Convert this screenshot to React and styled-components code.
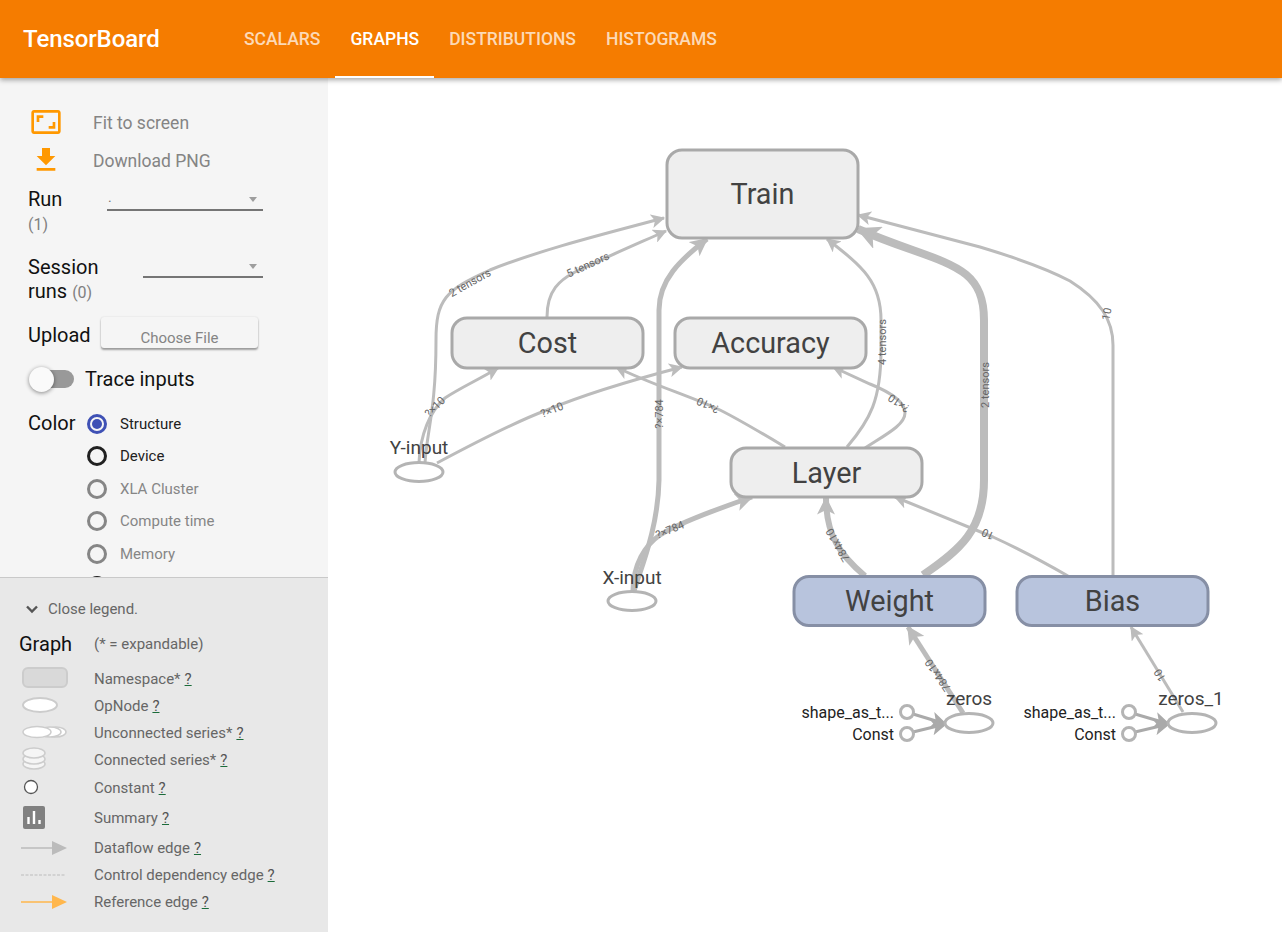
import styled, { createGlobalStyle } from "styled-components"

const GlobalStyle = createGlobalStyle`
  html, body {
    margin: 0;
    height: 100%;
    overflow: hidden;
    font-family: Roboto, "Liberation Sans", sans-serif;
  }
  #root {
    height: 100%;
  }
`

const Page = styled.div`
  height: 100vh;
  display: flex;
  flex-direction: column;
`

const Header = styled.header`
  height: 78px;
  flex: none;
  display: flex;
  align-items: stretch;
  background: #f57c00;
  box-shadow: 0 2px 5px rgba(0, 0, 0, 0.35);
  position: relative;
  z-index: 2;
`

const Title = styled.div`
  width: 206px;
  padding-left: 23px;
  line-height: 78px;
  font-size: 24px;
  font-weight: 500;
  color: #fff;
  letter-spacing: -0.1px;
`

const Tab = styled.div`
  padding: 0 15px;
  line-height: 78px;
  font-size: 17.5px;
  font-weight: 500;
  color: ${props => (props.$active ? "#fff" : "rgba(255, 255, 255, 0.72)")};
  border-bottom: 2px solid ${props => (props.$active ? "#fff" : "transparent")};
  height: 76px;
`

const Body = styled.div`
  flex: 1;
  min-height: 0;
  display: flex;
`

const Sidebar = styled.aside`
  width: 328px;
  flex: none;
  display: flex;
  flex-direction: column;
`

const Controls = styled.div`
  flex: 1;
  min-height: 0;
  overflow: hidden;
  background: #f5f5f5;
  padding: 25px 0 0 28px;
`

const ToolRow = styled.div`
  height: 38px;
  display: flex;
  align-items: center;
  font-size: 17.5px;
  color: #848484;
`

const ToolIcon = styled.svg`
  width: 32px;
  height: 32px;
  margin: 0 31px 0 2px;
  fill: #ff9800;
`

const ToolLabel = styled.span`
  padding-top: 2px;
`

const FieldRow = styled.div`
  display: flex;
  align-items: flex-start;
  margin-top: ${props => props.$top}px;
`

const FieldLabel = styled.div`
  width: ${props => props.$width}px;
  flex: none;
  padding-top: ${props => props.$pad || 0}px;
  font-size: 20px;
  line-height: 24px;
  color: #111;
`

const Count = styled.span`
  font-size: 16px;
  line-height: 16px;
  color: #808080;
`

const Select = styled.div`
  width: ${props => props.$width}px;
  height: 24px;
  box-sizing: border-box;
  border-bottom: 2px solid #757575;
  display: flex;
  justify-content: space-between;
  padding: 0 2px 0 1px;
  font-size: 14px;
  line-height: 20px;
  color: #757575;
`

const Caret = styled.div`
  width: 0;
  height: 0;
  margin: 10px 4px 0 0;
  border-left: 4px solid transparent;
  border-right: 4px solid transparent;
  border-top: 5px solid #9e9e9e;
`

const UploadLabel = styled.div`
  width: 73px;
  height: 31px;
  font-size: 20px;
  line-height: 37px;
  color: #111;
`

const FileButton = styled.div`
  width: 157px;
  height: 31px;
  box-sizing: border-box;
  padding-top: 12px;
  border-radius: 3px;
  background: #f5f5f5;
  box-shadow: 0 2px 2px rgba(0, 0, 0, 0.35), 0 0 2px rgba(0, 0, 0, 0.12);
  text-align: center;
  font-size: 15px;
  line-height: 18px;
  color: #848484;
`

const ToggleRow = styled.div`
  display: flex;
  align-items: center;
  height: 24px;
  margin-top: 19px;
  font-size: 20px;
  color: #111;
`

const Toggle = styled.div`
  width: 46px;
  height: 25px;
  margin: 0 11px 0 0;
  position: relative;
`

const ToggleTrack = styled.div`
  position: absolute;
  left: 7px;
  right: 0;
  top: 3px;
  height: 18px;
  border-radius: 9px;
  background: #999;
`

const ToggleKnob = styled.div`
  position: absolute;
  left: 1px;
  top: 0;
  width: 25px;
  height: 25px;
  border-radius: 50%;
  background: #fafafa;
  box-shadow: 0 1px 4px rgba(0, 0, 0, 0.45);
`

const ColorRow = styled.div`
  display: flex;
  margin-top: 16.5px;
`

const ColorLabel = styled.div`
  width: 59px;
  flex: none;
  font-size: 20px;
  line-height: 31px;
  color: #111;
`

const RadioRow = styled.div`
  height: 32.5px;
  display: flex;
  align-items: center;
  font-size: 15px;
  color: ${props => (props.$disabled ? "#868686" : "#212121")};
`

const Radio = styled.div`
  width: 20px;
  height: 20px;
  box-sizing: border-box;
  margin-right: 13px;
  border-radius: 50%;
  border: 3px solid ${props => props.$color};
  display: flex;
  align-items: center;
  justify-content: center;

  &::after {
    content: "";
    width: 10px;
    height: 10px;
    border-radius: 50%;
    background: ${props => (props.$checked ? props.$color : "transparent")};
  }
`

const Legend = styled.div`
  height: 355px;
  flex: none;
  box-sizing: border-box;
  overflow: hidden;
  background: #e8e8e8;
  border-top: 1px solid #c9c9c9;
  padding: 21px 0 0 19px;
`

const CloseRow = styled.div`
  display: flex;
  align-items: center;
  height: 20px;
  font-size: 15px;
  color: #666;
`

const Chevron = styled.svg`
  width: 16px;
  height: 16px;
  margin: 0 8px 0 5px;
  stroke: #555;
  stroke-width: 2.4;
  fill: none;
`

const GraphRow = styled.div`
  display: flex;
  align-items: center;
  height: 20px;
  margin: 15px 0 11.5px;
`

const GraphTitle = styled.div`
  width: 75px;
  font-size: 20px;
  color: #111;
`

const LegendHint = styled.div`
  font-size: 15px;
  color: #666;
`

const LegendRow = styled.div`
  height: ${props => props.$height}px;
  display: flex;
  align-items: center;
  font-size: 15px;
  color: #666;
`

const LegendIcon = styled.svg`
  width: 75px;
  height: 30px;
  flex: none;
  overflow: visible;
`

const Help = styled.span`
  margin-left: 4px;
  color: #555;
  text-decoration: underline;
  text-decoration-color: #1b6b3a;
`

const Main = styled.main`
  flex: 1;
  min-width: 0;
  background: #fff;
`

const Graph = styled.svg`
  display: block;
  width: 954px;
  height: 854px;
`

const NodeBox = styled.rect`
  fill: ${props => (props.$blue ? "#b8c4dd" : "#eee")};
  stroke: ${props => (props.$blue ? "#868fa5" : "#a9a9a9")};
  stroke-width: 3;
`

const NodeText = styled.text`
  font-family: Roboto, "Liberation Sans", sans-serif;
  font-size: 28.8px;
  fill: #424242;
  text-anchor: middle;
  dominant-baseline: central;
`

const OpEllipse = styled.ellipse`
  fill: #fff;
  stroke: #b4b4b4;
  stroke-width: 3;
`

const OpText = styled.text`
  font-family: Roboto, "Liberation Sans", sans-serif;
  font-size: 19px;
  fill: #424242;
  text-anchor: middle;
  dominant-baseline: central;
`

const ConstText = styled.text`
  font-family: Roboto, "Liberation Sans", sans-serif;
  font-size: 16px;
  fill: #222;
  text-anchor: end;
  dominant-baseline: central;
`

const Edge = styled.path`
  fill: none;
  stroke: ${props => props.$color || "#bcbcbc"};
  stroke-width: ${props => props.$w};
`

const EdgeLabel = styled.text`
  font-family: Roboto, "Liberation Sans", sans-serif;
  font-size: 11px;
  fill: #666;
  text-anchor: middle;
  dominant-baseline: central;
`

const tabs = ["SCALARS", "GRAPHS", "DISTRIBUTIONS", "HISTOGRAMS"]

const radios = [
  { label: "Structure", color: "#3f51b5", checked: true },
  { label: "Device", color: "#212121" },
  { label: "XLA Cluster", color: "#868686", disabled: true },
  { label: "Compute time", color: "#868686", disabled: true },
  { label: "Memory", color: "#868686", disabled: true },
  { label: "", color: "#212121" },
]

const nodes = [
  { label: "Train", x: 667, y: 150, h: 88 },
  { label: "Cost", x: 452, y: 318, h: 50 },
  { label: "Accuracy", x: 675, y: 318, h: 50 },
  { label: "Layer", x: 731, y: 448, h: 49 },
  { label: "Weight", x: 794, y: 576.5, h: 49, blue: true },
  { label: "Bias", x: 1017, y: 576.5, h: 49, blue: true },
]

const edges = [
  { d: "M425 463C427 430 436 410 436 340C436 300 445 290 490 270C540 250 600 235 664 218", w: 3, m: "s" },
  { d: "M419 463C420 435 430 411 445 398C460 388 478 380 498 368", w: 3, m: "s" },
  { d: "M437 463C480 440 520 420 547 410C590 392 640 378 682 367", w: 3, m: "s" },
  { d: "M547 317C547 290 560 280 575 272C600 260 630 247 666 231", w: 3, m: "s" },
  { d: "M634 591C640 570 658 530 659 480L659 310C659 280 680 260 707 239", w: 5, m: "m" },
  { d: "M633 591C633 565 645 545 660 535C680 522 720 508 752 497", w: 5, m: "m" },
  { d: "M785 447C760 432 740 420 720 410C690 396 650 384 616 367", w: 3, m: "s" },
  { d: "M865 448C885 435 905 425 905 413C905 400 885 390 870 384L833 367", w: 3, m: "s" },
  { d: "M847 447C870 420 881 400 881 350L881 320C881 280 860 265 827 239", w: 3, m: "s" },
  { d: "M865 576C840 555 826 535 826 498", w: 6, m: "m" },
  { d: "M923 575C960 550 984 530 984 480L984 320C984 260 940 265 858 229", w: 8, m: "l" },
  { d: "M1113 577L1113 345C1113 320 1100 300 1070 281C1040 265 1000 253 980 247L858 215", w: 3, m: "s" },
  { d: "M1068 576C1040 560 1015 547 993 537L895 497", w: 3, m: "s" },
  { d: "M963 713L908 627", w: 5, m: "m" },
  { d: "M1183 712L1131 627", w: 3, m: "s" },
  { d: "M913 714L946 724", w: 3, m: "c", color: "#aaa" },
  { d: "M913 732L946 724", w: 3, m: "c", color: "#aaa" },
  { d: "M1135 714L1169 724", w: 3, m: "c", color: "#aaa" },
  { d: "M1135 732L1169 724", w: 3, m: "c", color: "#aaa" },
]

const edgeLabels = [
  { text: "2 tensors", x: 470, y: 283, r: -29 },
  { text: "5 tensors", x: 588, y: 265, r: -25 },
  { text: "?×10", x: 435, y: 407, r: -45 },
  { text: "?×10", x: 552, y: 410, r: -22 },
  { text: "?×784", x: 659, y: 414, r: -90 },
  { text: "?×10", x: 708, y: 405, r: 205 },
  { text: "?×10", x: 899, y: 403, r: 215 },
  { text: "4 tensors", x: 882, y: 342, r: -90 },
  { text: "2 tensors", x: 985, y: 385, r: -90 },
  { text: "10", x: 1107, y: 314, r: -80 },
  { text: "10", x: 988, y: 534, r: 205 },
  { text: "?×784", x: 670, y: 530, r: -22 },
  { text: "784x10", x: 838, y: 545, r: 240 },
  { text: "784x10", x: 938, y: 675, r: 235 },
  { text: "10", x: 1160, y: 675, r: 238 },
]

const ops = [
  { label: "Y-input", x: 419, y: 472, tx: 419, ty: 447 },
  { label: "X-input", x: 632, y: 601, tx: 632, ty: 577 },
  { label: "zeros", x: 969, y: 723, tx: 969, ty: 698 },
  { label: "zeros_1", x: 1192, y: 723, tx: 1191, ty: 698 },
]

const constants = [
  { label: "shape_as_t...", x: 907, y: 712 },
  { label: "Const", x: 907, y: 734 },
  { label: "shape_as_t...", x: 1129, y: 712 },
  { label: "Const", x: 1129, y: 734 },
]

const Marker = ({ id, size, color = "#bcbcbc" }) => (
  <marker
    id={id}
    viewBox="0 0 12 12"
    refX="11"
    refY="6"
    markerWidth={size}
    markerHeight={size}
    markerUnits="userSpaceOnUse"
    orient="auto"
  >
    <path d="M0 0L12 6L0 12L3 6Z" fill={color} />
  </marker>
)

const legendRows = [
  {
    label: "Namespace*",
    height: 27,
    icon: <rect x="4" y="4" width="44" height="19" rx="5" fill="#d9d9d9" stroke="#ccc" strokeWidth="2" />,
  },
  {
    label: "OpNode",
    height: 27,
    icon: <ellipse cx="21" cy="14" rx="17" ry="7" fill="#fff" stroke="#ccc" strokeWidth="2" />,
  },
  {
    label: "Unconnected series*",
    height: 27,
    icon: (
      <g fill="#fff" stroke="#ccc" strokeWidth="1.5">
        <ellipse cx="37" cy="14" rx="10" ry="5" />
        <ellipse cx="31" cy="14" rx="11" ry="5" />
        <ellipse cx="18" cy="14" rx="14" ry="5.5" />
      </g>
    ),
  },
  {
    label: "Connected series*",
    height: 27,
    icon: (
      <g fill="#f5f5f5" stroke="#ccc" strokeWidth="1.5">
        <ellipse cx="15" cy="19" rx="11" ry="5" />
        <ellipse cx="15" cy="14" rx="11" ry="5" />
        <ellipse cx="15" cy="8" rx="11" ry="5" />
      </g>
    ),
  },
  {
    label: "Constant",
    height: 29,
    icon: <circle cx="12" cy="14" r="6.5" fill="#fff" stroke="#555" strokeWidth="1.3" />,
  },
  {
    label: "Summary",
    height: 31,
    icon: (
      <g>
        <rect x="4" y="3" width="22" height="23" rx="2" fill="#808080" />
        <path d="M9.5 21v-7M15 21V8M20.5 21v-4" stroke="#fff" strokeWidth="2.4" />
      </g>
    ),
  },
  {
    label: "Dataflow edge",
    height: 29,
    icon: (
      <g>
        <path d="M2 15H36" stroke="#bbb" strokeWidth="1.5" />
        <path d="M33 8L48 15L33 22Z" fill="#bbb" />
      </g>
    ),
  },
  {
    label: "Control dependency edge",
    height: 25,
    icon: <path d="M2 15H47" stroke="#bbb" strokeWidth="1.2" strokeDasharray="3 1.5" />,
  },
  {
    label: "Reference edge",
    height: 29,
    icon: (
      <g>
        <path d="M2 15H36" stroke="#ffb74d" strokeWidth="1.5" />
        <path d="M33 8L48 15L33 22Z" fill="#ffb74d" />
      </g>
    ),
  },
]

export default function App() {
  return (
    <Page>
      <GlobalStyle />
      <Header>
        <Title>TensorBoard</Title>
        {tabs.map(tab => (
          <Tab key={tab} $active={tab === "GRAPHS"}>
            {tab}
          </Tab>
        ))}
      </Header>
      <Body>
        <Sidebar>
          <Controls>
            <ToolRow>
              <ToolIcon viewBox="0 0 24 24">
                <path d="M19 12h-2v3h-3v2h5v-5zM7 9h3V7H5v5h2V9zm14-6H3c-1.1 0-2 .9-2 2v14c0 1.1.9 2 2 2h18c1.1 0 2-.9 2-2V5c0-1.1-.9-2-2-2zm0 16.01H3V4.99h18v14.02z" />
              </ToolIcon>
              <ToolLabel>Fit to screen</ToolLabel>
            </ToolRow>
            <ToolRow>
              <ToolIcon viewBox="0 0 24 24">
                <path d="M19 9h-4V3H9v6H5l7 7 7-7zM5 18v2h14v-2H5z" />
              </ToolIcon>
              <ToolLabel>Download PNG</ToolLabel>
            </ToolRow>
            <FieldRow $top={8}>
              <FieldLabel $width={79}>
                Run
                <br />
                <Count>(1)</Count>
              </FieldLabel>
              <Select $width={156}>
                .
                <Caret />
              </Select>
            </FieldRow>
            <FieldRow $top={19}>
              <FieldLabel $width={115} $pad={1}>
                Session
                <br />
                runs <Count>(0)</Count>
              </FieldLabel>
              <Select $width={120}>
                <span />
                <Caret />
              </Select>
            </FieldRow>
            <FieldRow $top={14}>
              <UploadLabel>Upload</UploadLabel>
              <FileButton>Choose File</FileButton>
            </FieldRow>
            <ToggleRow>
              <Toggle>
                <ToggleTrack />
                <ToggleKnob />
              </Toggle>
              Trace inputs
            </ToggleRow>
            <ColorRow>
              <ColorLabel>Color</ColorLabel>
              <div>
                {radios.map((radio, i) => (
                  <RadioRow key={i} $disabled={radio.disabled}>
                    <Radio $color={radio.color} $checked={radio.checked} />
                    {radio.label}
                  </RadioRow>
                ))}
              </div>
            </ColorRow>
          </Controls>
          <Legend>
            <CloseRow>
              <Chevron viewBox="0 0 16 16">
                <path d="M3 5.5L8 10.5L13 5.5" />
              </Chevron>
              Close legend.
            </CloseRow>
            <GraphRow>
              <GraphTitle>Graph</GraphTitle>
              <LegendHint>(* = expandable)</LegendHint>
            </GraphRow>
            {legendRows.map(row => (
              <LegendRow key={row.label} $height={row.height}>
                <LegendIcon viewBox="0 0 75 30">{row.icon}</LegendIcon>
                {row.label}
                <Help>?</Help>
              </LegendRow>
            ))}
          </Legend>
        </Sidebar>
        <Main>
          <Graph viewBox="328 78 954 854">
            <defs>
              <Marker id="arrow-s" size={14} />
              <Marker id="arrow-m" size={18} />
              <Marker id="arrow-l" size={24} />
              <Marker id="arrow-c" size={16} color="#aaa" />
            </defs>
            {edges.map(edge => (
              <Edge key={edge.d} d={edge.d} $w={edge.w} $color={edge.color} markerEnd={`url(#arrow-${edge.m})`} />
            ))}
            {nodes.map(node => (
              <g key={node.label}>
                <NodeBox x={node.x} y={node.y} width={191} height={node.h} rx="15" $blue={node.blue} />
                <NodeText x={node.x + 95.5} y={node.y + node.h / 2}>
                  {node.label}
                </NodeText>
              </g>
            ))}
            {ops.map(op => (
              <g key={op.label}>
                <OpEllipse cx={op.x} cy={op.y} rx="24" ry="9.5" />
                <OpText x={op.tx} y={op.ty}>
                  {op.label}
                </OpText>
              </g>
            ))}
            {constants.map(item => (
              <g key={`${item.label}-${item.x}`}>
                <OpEllipse cx={item.x} cy={item.y} rx="6.5" ry="6.5" />
                <ConstText x={item.x - 13} y={item.y}>
                  {item.label}
                </ConstText>
              </g>
            ))}
            {edgeLabels.map(label => (
              <EdgeLabel
                key={`${label.x}-${label.y}`}
                x={label.x}
                y={label.y}
                transform={`rotate(${label.r} ${label.x} ${label.y})`}
              >
                {label.text}
              </EdgeLabel>
            ))}
          </Graph>
        </Main>
      </Body>
    </Page>
  )
}
